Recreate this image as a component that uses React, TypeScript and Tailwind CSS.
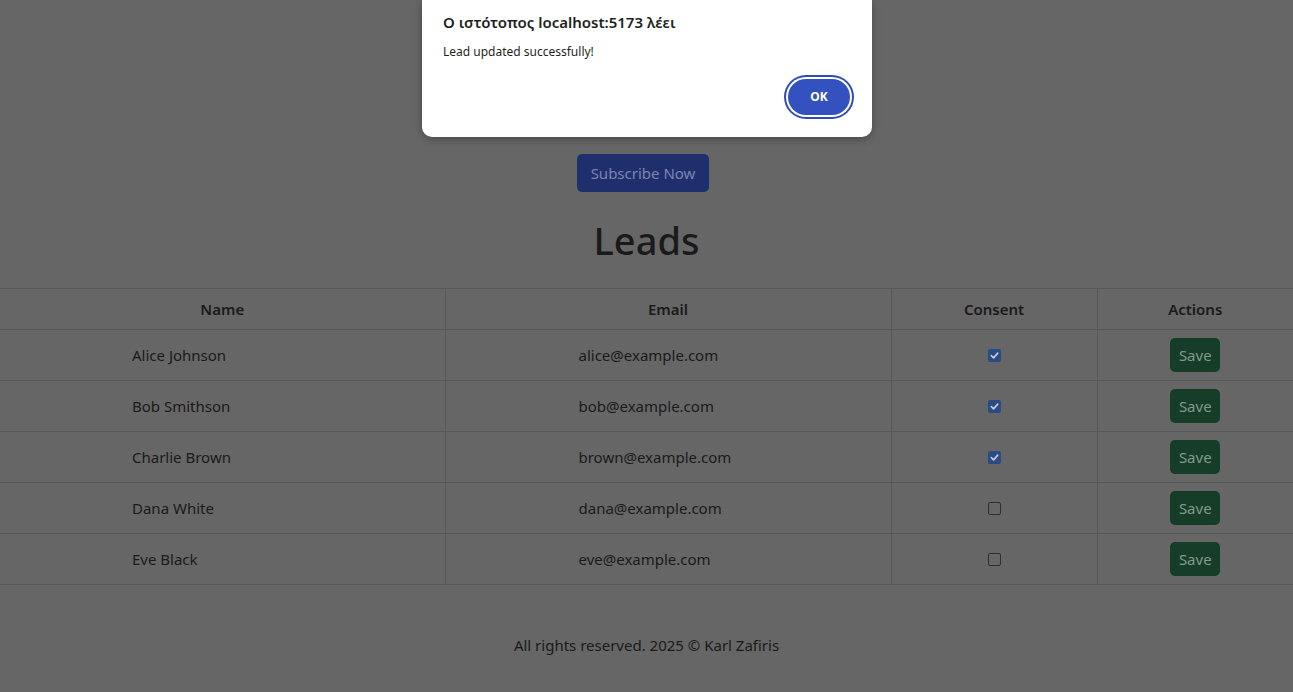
const leads = [
  { name: "Alice Johnson", email: "alice@example.com", consent: true },
  { name: "Bob Smithson", email: "bob@example.com", consent: true },
  { name: "Charlie Brown", email: "brown@example.com", consent: true },
  { name: "Dana White", email: "dana@example.com", consent: false },
  { name: "Eve Black", email: "eve@example.com", consent: false },
];

const font = { fontFamily: '"Noto Sans", "Open Sans", sans-serif' };

const Checkbox = ({ checked }: { checked: boolean }) =>
  checked ? (
    <span className="inline-flex w-[13px] h-[13px] rounded-[2px] bg-[#2a4c82] items-center justify-center">
      <svg width="9" height="9" viewBox="0 0 10 10">
        <path d="M1.5 5.2 L4 7.6 L8.6 2.4" fill="none" stroke="#c9ccd2" strokeWidth="1.8" strokeLinecap="round" strokeLinejoin="round" />
      </svg>
    </span>
  ) : (
    <span className="inline-block w-[13px] h-[13px] rounded-[2px] border border-[#2e2e2e]" />
  );

export default function App() {
  return (
    <div className="relative min-h-[692px] bg-[#666666] text-[#1a1a1a] font-['Noto_Sans','Open_Sans',sans-serif]">
      <div className="flex flex-col items-center pt-[154px]">
        <button className="h-[38px] px-[14px] mr-[7px] rounded-[5px] bg-[#1f2f6e] text-[#7c86ac] text-[15px]">
          Subscribe Now
        </button>
        <h1 className="mt-[20px] text-[38px] font-medium leading-[56px]">Leads</h1>

        <table className="mt-[20px] w-full border-collapse text-[15px]">
          <thead>
            <tr className="h-[41px] border-y border-[#575757]">
              <th className="w-[445px] font-semibold">Name</th>
              <th className="w-[446px] font-semibold border-l border-[#575757]">Email</th>
              <th className="w-[206px] font-semibold border-l border-[#575757]">Consent</th>
              <th className="font-semibold border-l border-[#575757]">Actions</th>
            </tr>
          </thead>
          <tbody>
            {leads.map((l) => (
              <tr key={l.email} className="h-[51px] border-b border-[#575757]">
                <td className="pl-[132px]">{l.name}</td>
                <td className="pl-[133px] border-l border-[#575757]">{l.email}</td>
                <td className="text-center border-l border-[#575757]">
                  <span className="inline-flex align-middle -mt-[2px]">
                    <Checkbox checked={l.consent} />
                  </span>
                </td>
                <td className="text-center border-l border-[#575757]">
                  <button className="h-[34px] w-[50px] rounded-[5px] bg-[#153d27] text-[#849a8b]">Save</button>
                </td>
              </tr>
            ))}
          </tbody>
        </table>

        <p className="mt-[49px] text-[15px]">All rights reserved. 2025 © Karl Zafiris</p>
      </div>

      {/* browser alert */}
      <div
        className="absolute left-[422px] top-0 w-[450px] h-[137px] bg-white rounded-b-[10px] shadow-[0_2px_8px_rgba(0,0,0,0.3)] pl-[21px] pr-[22px] pt-[11px]"
        style={font}
      >
        <div className="text-[15px] leading-[22px] font-semibold text-[#1f1f1f]">Ο ιστότοπος localhost:5173 λέει</div>
        <div className="mt-[10px] text-[12px] leading-[17px] text-[#1f1f1f]">Lead updated successfully!</div>
        <div className="flex justify-end mt-[19px]">
          <button className="w-[62px] h-[36px] rounded-full bg-[#3451c0] text-white text-[12px] font-bold ring-2 ring-[#2f4cb8] ring-offset-2 ring-offset-white">
            OK
          </button>
        </div>
      </div>
    </div>
  );
}
